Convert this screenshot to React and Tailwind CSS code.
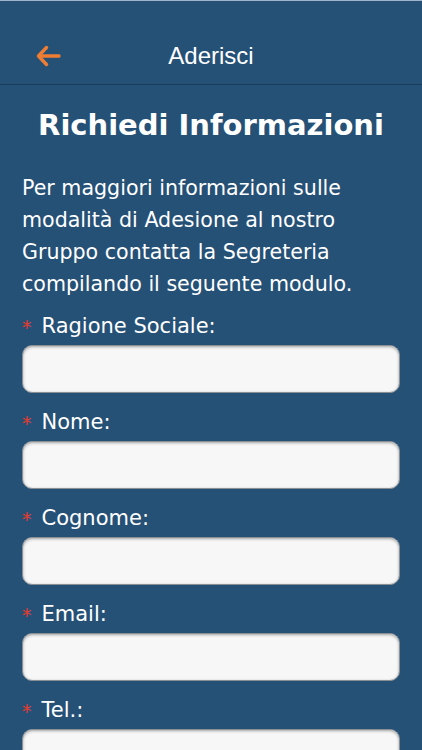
const fields = ['Ragione Sociale:', 'Nome:', 'Cognome:', 'Email:', 'Tel.:'];

const Field = ({ label }) => (
  <div className="flex flex-col">
    <label className="flex h-[30px] items-center text-[21px] text-white">
      <span className="mr-[10px] text-[19px] text-[#e23b2e]">*</span>
      {label}
    </label>
    <div className="mt-[3px] h-[48px] rounded-[10px] border border-[#8a8f96] bg-[#f7f7f7] shadow-[inset_0_1px_3px_rgba(0,0,0,0.35)]" />
  </div>
);

const App = () => (
  <div className="h-[750px] overflow-hidden bg-[#265177] font-['DejaVu_Sans',sans-serif]">
    <div className="h-[1px] bg-[#9fb3c8]" />
    <header className="relative flex h-[84px] items-center justify-center border-b border-[#1b3d5c] pt-[26px]">
      <button className="absolute left-[35px] top-[43px] text-[#ef7d33]" aria-label="Indietro">
        <svg width="27" height="24" viewBox="0 0 27 24" fill="none" stroke="currentColor" strokeWidth="3.4" strokeLinecap="round" strokeLinejoin="round">
          <path d="M24 12H4" />
          <path d="M11.5 3.5L3.5 12L11.5 20.5" />
        </svg>
      </button>
      <h1 className="font-['Liberation_Sans',sans-serif] text-[24px] text-white">Aderisci</h1>
    </header>
    <main className="px-[22px]">
      <h2 className="mt-[23px] text-center text-[29px] font-bold leading-[34px] text-white">Richiedi Informazioni</h2>
      <p className="mt-[30px] text-[20.6px] leading-[32px] text-white">
        Per maggiori informazioni sulle modalità di Adesione al nostro Gruppo contatta la Segreteria compilando il seguente modulo.
      </p>
      <div className="mt-[12px] flex flex-col gap-[15px]">
        {fields.map((f) => (
          <Field key={f} label={f} />
        ))}
      </div>
    </main>
  </div>
);

export default App;
